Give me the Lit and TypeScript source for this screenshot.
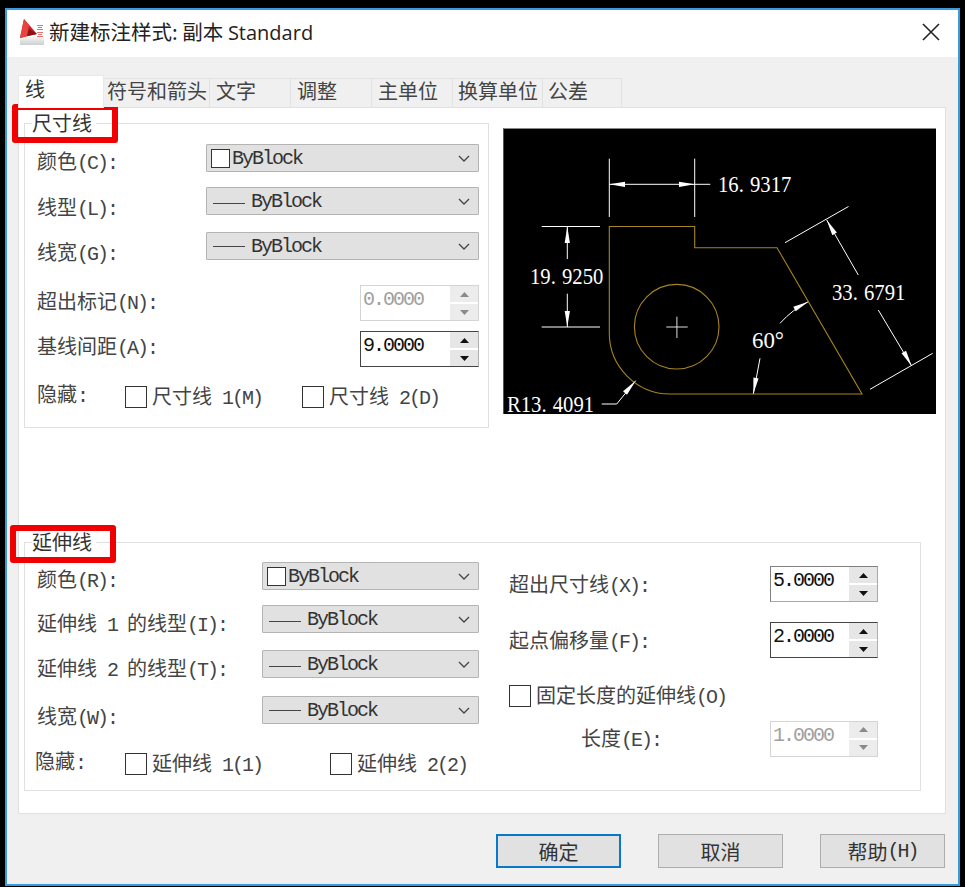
import { LitElement, html, css, svg } from "lit";
import { customElement } from "lit/decorators.js";

const lat = (s: string) =>
  s.split(/([\x20-\x7e]+)/).filter(Boolean).map((p) =>
    /^[\x20-\x7e]+$/.test(p) ? html`<span class="lat">${p}</span>` : p);

const arrow = (tx: number, ty: number, bx: number, by: number, w = 2.6) => {
  const dx = bx - tx, dy = by - ty, l = Math.hypot(dx, dy);
  const nx = (-dy / l) * w, ny = (dx / l) * w;
  return svg`<polygon points="${tx},${ty} ${bx + nx},${by + ny} ${bx - nx},${by - ny}" fill="#fff"/>`;
};

const dim = (x: number, y: number, a: string, b: string) =>
  svg`<text transform="translate(${x} ${y}) scale(.88 1)">${a}<tspan dx="7">${b}</tspan></text>`;

const chevron = html`<svg class="chev" width="12" height="7" viewBox="0 0 12 7"><polyline points="1,1 6,6 11,1" fill="none" stroke="#444" stroke-width="1.3"/></svg>`;

const select = (kind: "color" | "thin" | "thick") => html`
  <div class="select">
    ${kind === "color"
      ? html`<span class="swatch"></span><span class="lat st">ByBlock</span>`
      : html`<span class="line ${kind}"></span><span class="lat st">ByBlock</span>`}
    ${chevron}
  </div>`;

const spin = (value: string, disabled = false, active = false, narrow = false) => {
  const c = disabled ? "#8a8a8a" : "#111";
  return html`
  <div class="spin ${disabled ? "off" : ""} ${active ? "act" : ""} ${narrow ? "narrow" : ""}">
    <span class="lat val">${value}</span>
    <div class="btns">
      <div class="sb"><svg width="9" height="5" viewBox="0 0 9 5"><polygon points="4.5,0 9,5 0,5" fill="${c}"/></svg></div>
      <div class="sb"><svg width="9" height="5" viewBox="0 0 9 5"><polygon points="0,0 9,0 4.5,5" fill="${c}"/></svg></div>
    </div>
  </div>`;
};

const check = (label: string) => html`<label class="check"><span class="box"></span><span>${lat(label)}</span></label>`;

@customElement("app-root")
export class AppRoot extends LitElement {
  static styles = css`
    :host { display: block; width: 965px; height: 887px; background: #000; overflow: hidden;
      font-family: "Noto Sans CJK SC", "Noto Sans", sans-serif; font-size: 20px; color: #444; }
    .lat { font-family: "Liberation Mono", monospace; font-size: 20px; letter-spacing: -2px; }
    .st { padding-top: 2px; line-height: 24px; }
    .win { box-sizing: border-box; width: 955px; height: 878px; margin: 8px 0 0 5px; border: 2px solid #3a9ae0;
      background: #f0f0f0; display: flex; flex-direction: column; }
    .title { box-sizing: border-box; height: 47px; background: #fff; display: flex; align-items: center; padding: 0 18px 3px 13px; }
    .logo { margin-right: 3px; }
    .ttext { font-size: 20.5px; color: #222; flex: 1; line-height: 1; }
    .ttext .en { font-family: "Open Sans", "Noto Sans", sans-serif; font-size: 20px; }
    .body { flex: 1; padding: 18px 0 0 11px; display: flex; flex-direction: column; }
    .tabs { display: flex; align-items: flex-end; height: 32px; position: relative; z-index: 1; }
    .tab { box-sizing: border-box; height: 29px; border: 1px solid #e2e2e2; border-left: 0; border-bottom: 0;
      line-height: 24px; padding-left: 3px; background: #f0f0f0; white-space: nowrap; }
    .tab.a { height: 33px; width: 86px; background: #fff; border: 1px solid #e8e8e8; border-bottom: 0; padding-left: 6px; margin-bottom: -1px; line-height: 25px; color: #333; }
    .w106 { width: 106px; } .w81 { width: 81px; padding-left: 6px; } .w90 { width: 90px; padding-left: 5px; } .w79 { width: 79px; padding-left: 5px; }
    .panel { box-sizing: border-box; width: 928px; height: 707px; background: #fff; border: 1px solid #e0e0e0; padding: 15px 0 0 5px; }
    .top { display: flex; gap: 15px; align-items: flex-start; }
    .fs { box-sizing: border-box; border: 1px solid #e0e0e0; position: relative; }
    .fs1 { width: 465px; height: 305px; padding: 20px 9px 0 12px; }
    .fs2 { width: 897px; height: 249px; margin-top: 114px; padding: 19px 0 0 12px; display: flex; gap: 30px; }
    .legend { position: absolute; left: 7px; top: -15px; background: #fff; padding-right: 4px; line-height: 28px; color: #333; }
    .mark { position: absolute; box-sizing: border-box; width: 106px; border: 6px solid #f00000; border-radius: 3px; }
    .m1 { left: -13px; top: -20px; height: 39px; }
    .m2 { left: -15px; top: -18px; height: 38px; }
    .preview { display: block; box-sizing: content-box; margin: 5px 0 0 -1px; background: #000; border-top: 1px solid #888; border-left: 1px solid #555; overflow: visible; }
    .preview text { font-family: "Liberation Serif", serif; font-size: 23.5px; fill: #fff; }
    .row { display: flex; justify-content: space-between; align-items: center; }
    .row > .l { line-height: 24px; }
    .h28 { height: 28px; } .h36 { height: 36px; }
    .p9 { padding-top: 9px; } .p11 { padding-top: 11px; } .p15 { padding-top: 15px; } .p5 { padding-top: 5px; } .p2 { padding-top: 2px; }
    .b1 { padding-bottom: 1px; } .b3 { padding-bottom: 3px; }
    .g15 { margin-top: 15px; } .g17 { margin-top: 17px; } .g18 { margin-top: 18px; } .g25 { margin-top: 25px; } .g10 { margin-top: 10px; }
    .select { box-sizing: border-box; height: 28px; width: 273px; background: #e1e1e1; border: 1px solid #b4b4b4; border-radius: 1px;
      display: flex; align-items: center; padding-left: 6px; position: relative; color: #333; }
    .sel2 .select { width: 217px; }
    .swatch { box-sizing: border-box; width: 19px; height: 19px; border: 1px solid #333; background: #fff; margin-left: -2px; margin-right: 2px; }
    .line { width: 32px; margin-right: 6px; margin-top: 5px; border-top: 1px solid #444; }
    .line.thick { margin-top: 0; }
    .chev { position: absolute; right: 8px; top: 10px; }
    .spin { box-sizing: border-box; width: 119px; height: 36px; background: #fff; border: 1px solid #a8a8a8; border-top-color: #808080; border-left-color: #808080; display: flex; color: #111; }
    .spin.act { border-color: #444; border-right-color: #b0b0b0; }
    .spin.narrow { width: 108px; }
    .spin.off { border-color: #d4d4d4; color: #a0a0a0; }
    .val { flex: 1; padding: 3px 0 0 2px; line-height: 22px; }
    .btns { width: 28px; display: flex; flex-direction: column; gap: 2px; background: #fff; }
    .sb { flex: 1; background: #e6e6e6; display: flex; align-items: center; justify-content: center; }
    .spin.off .sb { background: #ececec; }
    .checks { display: grid; align-items: center; height: 22px; grid-template-rows: 22px; }
    .c1 { grid-template-columns: 88px 177px 1fr; margin-top: 19px; }
    .c2 { grid-template-columns: 90px 205px 1fr; margin-top: 29px; margin-left: -2px; }
    .hide { padding-bottom: 4px; line-height: 24px; }
    .check { display: flex; align-items: center; gap: 5px; white-space: nowrap; height: 22px; line-height: 22px; }
    .box { box-sizing: border-box; width: 22px; height: 22px; background: #fff; border: 1.5px solid #333; flex: none; }
    .left { width: 442px; }
    .right { width: 369px; padding-top: 5px; }
    .r34 { height: 34px; }
    .g22 { margin-top: 22px; }
    .fixed { margin-top: 28px; height: 22px; }
    .sub { margin-top: 14px; height: 35px; padding-left: 72px; }
    .foot { display: flex; justify-content: flex-end; gap: 37px; padding: 20px 13px 0 0; }
    .btn { box-sizing: border-box; width: 125px; height: 34px; background: #e1e1e1; border: 1px solid #adadad; display: flex; align-items: center; justify-content: center; color: #333; }
    .btn.def { border: 2px solid #0a78c8; }
  `;

  render() {
    return html`
      <div class="win">
        <div class="title">
          <svg class="logo" width="26" height="27" viewBox="0 0 26 27">
            <defs><linearGradient id="lg" x1="0" y1="0" x2="0" y2="1"><stop offset="0" stop-color="#f4f4f4"/><stop offset="1" stop-color="#cfcfcf"/></linearGradient></defs>
            <rect x="0" y="18" width="24" height="8" fill="url(#lg)"/>
            <polygon points="4,0 17,15 0,19" fill="#c81e24"/>
            <polygon points="4,0 9,6 7,17 0,19" fill="#e8433f"/>
            <polygon points="9,10 17,15 7,17" fill="#8e0f14"/>
            <g fill="#d84040" opacity=".75">
              <rect x="17" y="6" width="6" height="1"/><rect x="18" y="8" width="4" height="1"/><rect x="17" y="10" width="6" height="1"/>
              <rect x="17" y="13" width="6" height="1"/><rect x="18" y="15" width="4" height="1"/><rect x="17" y="17" width="6" height="1"/>
            </g>
          </svg>
          <div class="ttext">新建标注样式: 副本 <span class="en">Standard</span></div>
          <svg width="18" height="18" viewBox="0 0 18 18"><path d="M1 1 L17 17 M17 1 L1 17" stroke="#222" stroke-width="1.6" fill="none"/></svg>
        </div>
        <div class="body">
          <div class="tabs">
            <div class="tab a">线</div>
            <div class="tab w106">符号和箭头</div>
            <div class="tab w81">文字</div>
            <div class="tab w81">调整</div>
            <div class="tab w81">主单位</div>
            <div class="tab w90">换算单位</div>
            <div class="tab w79">公差</div>
          </div>
          <div class="panel">
            <div class="top">
              <div class="fs fs1">
                <div class="legend">尺寸线</div>
                <div class="row h28"><span class="l p9">${lat("颜色(C):")}</span>${select("color")}</div>
                <div class="row h28 g15"><span class="l p15">${lat("线型(L):")}</span>${select("thin")}</div>
                <div class="row h28 g17"><span class="l p15">${lat("线宽(G):")}</span>${select("thick")}</div>
                <div class="row h36 g25"><span class="l b1">${lat("超出标记(N):")}</span>${spin("0.0000", true)}</div>
                <div class="row h36 g10"><span class="l b3">${lat("基线间距(A):")}</span>${spin("9.0000", false, true)}</div>
                <div class="checks c1"><span class="hide">${lat("隐藏:")}</span>${check("尺寸线 1(M)")}${check("尺寸线 2(D)")}</div>
                <div class="mark m1"></div>
              </div>
              <svg class="preview" width="432" height="285" viewBox="504 129 432 285">
                <g stroke="#fff" stroke-width="1" fill="none">
                  <path d="M609.3 158.7V217M694.7 158.7V217M609.3 184.3H710.3"/>
                  <path d="M541.7 226.5H600M541.7 327H600M567.3 226.5V259M567.3 293.7V327"/>
                  <path d="M785 242.7L848.5 206.5M870 389.3L932.7 353.3M826.7 220L858.3 275M878.3 310L911.7 366"/>
                  <path d="M780 323.3Q793 309 808.3 301.7M760 358.3L753.3 394M601.7 404H616.7L635.7 380.7"/>
                  <path d="M666.3 327H687.7M676.9 316.7V338" stroke="#ddd"/>
                </g>
                <g stroke="#a5851c" stroke-width="1.1" fill="none">
                  <path d="M609.3 226.5H694.7V247.7H777L862 394H670A61 61 0 0 1 609.3 333Z"/>
                  <circle cx="676.7" cy="326.7" r="42.3"/>
                </g>
                ${arrow(609.3, 184.3, 625, 184.3)}${arrow(694.7, 184.3, 679, 184.3)}
                ${arrow(567.3, 226.5, 567.3, 243)}${arrow(567.3, 327, 567.3, 311)}
                ${arrow(826.7, 220, 834.6, 233.9)}${arrow(911.7, 366, 903.8, 352)}
                ${arrow(808.3, 301.7, 794.5, 309)}${arrow(753.3, 394, 756, 378)}
                ${arrow(635.7, 380.7, 625, 393)}
                ${dim(718, 192, "16.", "9317")}
                ${dim(530, 284, "19.", "9250")}
                ${dim(832, 300, "33.", "6791")}
                <text x="752" y="348" textLength="32" lengthAdjust="spacingAndGlyphs">60°</text>
                ${dim(507, 412, "R13.", "4091")}
              </svg>
            </div>
            <div class="fs fs2">
              <div class="legend">延伸线</div>
              <div class="left sel2">
                <div class="row h28"><span class="l p9">${lat("颜色(R):")}</span>${select("color")}</div>
                <div class="row h28 g15"><span class="l p11">${lat("延伸线 1 的线型(I):")}</span>${select("thin")}</div>
                <div class="row h28 g17"><span class="l p11">${lat("延伸线 2 的线型(T):")}</span>${select("thin")}</div>
                <div class="row h28 g18"><span class="l p15">${lat("线宽(W):")}</span>${select("thick")}</div>
                <div class="checks c2"><span class="hide">${lat("隐藏:")}</span>${check("延伸线 1(1)")}${check("延伸线 2(2)")}</div>
              </div>
              <div class="right">
                <div class="row r34"><span class="l p2">${lat("超出尺寸线(X):")}</span>${spin("5.0000", false, false, true)}</div>
                <div class="row r34 g22"><span class="l p2">${lat("起点偏移量(F):")}</span>${spin("2.0000", false, true, true)}</div>
                <div class="fixed">${check("固定长度的延伸线(O)")}</div>
                <div class="row sub"><span class="l p2">${lat("长度(E):")}</span>${spin("1.0000", true, false, true)}</div>
              </div>
              <div class="mark m2"></div>
            </div>
          </div>
          <div class="foot">
            <div class="btn def">确定</div>
            <div class="btn">取消</div>
            <div class="btn">${lat("帮助(H)")}</div>
          </div>
        </div>
      </div>`;
  }
}
